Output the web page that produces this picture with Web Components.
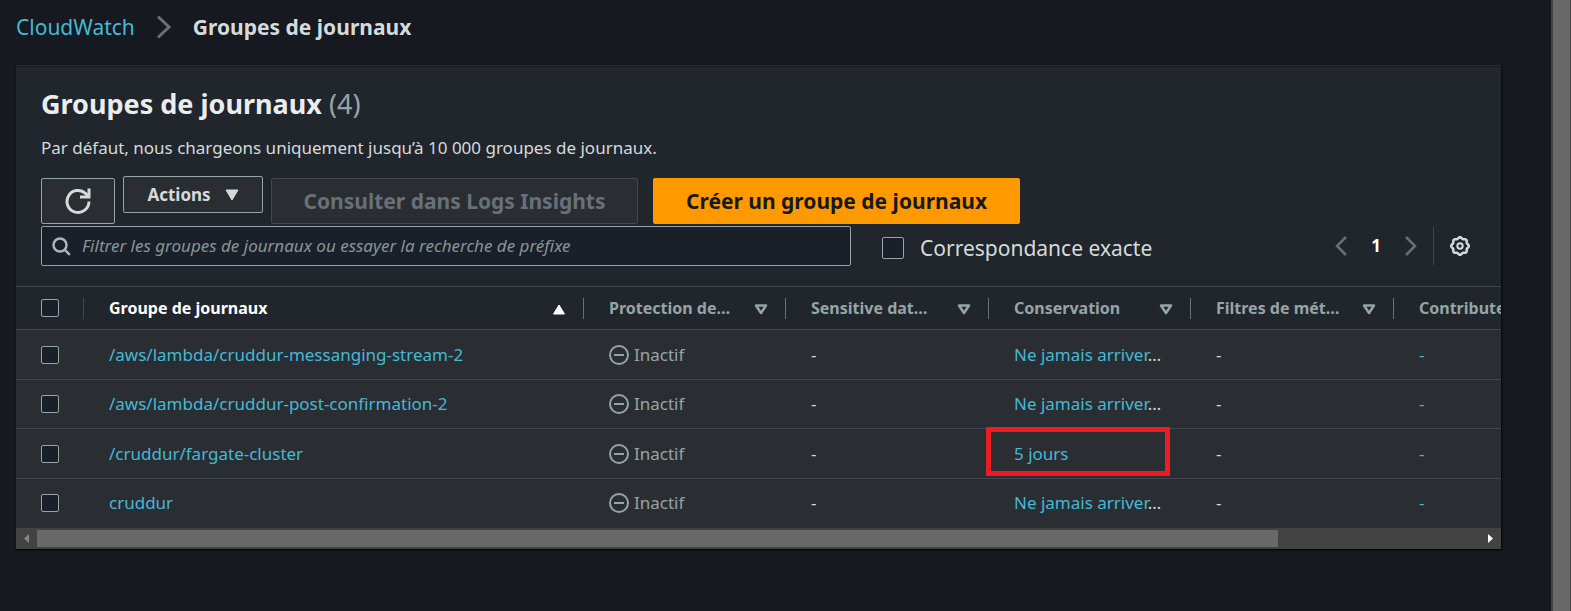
<!DOCTYPE html>
<html lang="fr">
<head>
<meta charset="utf-8">
<title>CloudWatch – Groupes de journaux</title>
<style>
  html, body { margin: 0; min-height: 100%; background: #16191f; }
  body { font-family: "Noto Sans", "Open Sans", sans-serif; font-size: 17px; line-height: 24px; color: #d5dbdb; }
</style>
</head>
<body>
<console-shell>
  <bread-crumbs></bread-crumbs>
  <log-panel>
    <panel-header slot="header"></panel-header>
    <filter-bar slot="filters"></filter-bar>
    <log-table></log-table>
  </log-panel>
</console-shell>

<script>
const define = (name, html, setup) => {
  const tpl = document.createElement('template');
  tpl.innerHTML = html;
  customElements.define(name, class extends HTMLElement {
    constructor() {
      super();
      this.attachShadow({ mode: 'open' }).append(tpl.content.cloneNode(true));
      if (setup) setup(this.shadowRoot);
    }
  });
};

const buttonCss = `
  button { font: inherit; font-weight: 700; box-sizing: border-box; margin: 0; padding: 0;
    display: flex; align-items: center; justify-content: center; color: #d5dbdb;
    background: #2a2e33; border: 1px solid #95a5a6; border-radius: 2px; white-space: nowrap; }`;

const checkCss = `
  input[type=checkbox] { appearance: none; box-sizing: border-box; display: block; flex: none; margin: 0;
    width: 18px; height: 18px; background: #1a2029; border: 1px solid #95a5a6; border-radius: 2px; }`;

define('console-shell', `
  <style>
    :host { display: flex; min-height: 100vh; }
    main { flex: 1; min-width: 0; padding: 11px 50px 24px 16px; }
    .scroll { flex: none; box-sizing: border-box; width: 20px; padding: 0 1px 0 2px; background: #424242; display: flex; }
    .scroll div { flex: 1; background: #686868; }
  </style>
  <main><slot></slot></main>
  <div class="scroll" aria-hidden="true"><div></div></div>`);

define('bread-crumbs', `
  <style>
    :host { display: block; font-size: 21px; line-height: 32px; }
    nav { display: flex; align-items: center; gap: 21px; }
    a { color: #44b9d6; text-decoration: none; }
    svg { display: block; }
    .here { font-weight: 700; }
  </style>
  <nav aria-label="Fil d’Ariane">
    <a href="#">CloudWatch</a>
    <svg width="16" height="24" viewBox="0 0 16 24" fill="none" stroke="#687078" stroke-width="3"><path d="M2 1.500l11 10.500L2 22.500"/></svg>
    <span class="here">Groupes de journaux</span>
  </nav>`);

define('log-panel', `
  <style>
    :host { display: block; margin-top: 22px; border-top: 1px solid #2a2e33; background: #21252c;
      box-shadow: 0 1px 1px 0 rgba(0,0,0,.6), 1px 1px 2px 0 rgba(0,0,0,.6), inset 0 1px 0 #16191f; }
    .top { padding: 20px 25px; }
  </style>
  <section>
    <div class="top"><slot name="header"></slot><slot name="filters"></slot></div>
    <slot></slot>
  </section>`);

define('panel-header', `
  <style>
    :host { display: block; }
    h1 { margin: 0; font-size: 27px; line-height: 36px; font-weight: 700; color: #eaeded; }
    h1 span { font-weight: 400; color: #95a5a6; }
    p { margin: 14px 0 0; font-size: 17px; line-height: 24px; }
    .actions { display: flex; align-items: flex-start; gap: 8px; margin-top: 16px; height: 50px; }
    ${buttonCss}
    button { height: 46px; margin-top: 2px; font-size: 21px; }
    .refresh { width: 74px; }
    .menu { width: 140px; height: 37px; margin-top: 0; gap: 14px; font-size: 17px; }
    .wide { width: 367px; }
    .wide:disabled { color: #687078; border-color: #414750; }
    .primary { margin-left: 7px; background: #ff9900; border-color: #ff9900; color: #16191f; }
    svg { display: block; }
  </style>
  <h1>Groupes de journaux <span>(4)</span></h1>
  <p>Par défaut, nous chargeons uniquement jusqu’à 10&nbsp;000 groupes de journaux.</p>
  <div class="actions">
    <button class="refresh" aria-label="Actualiser"><svg width="28" height="28" viewBox="0 0 28 28" fill="none" stroke="#d5dbdb" stroke-width="3"><path d="M25 14.500a11 11 0 1 1-3.500-8.100L24.500 9.500"/><path d="M25 1.500v8.500h-9"/></svg></button>
    <button class="menu">Actions <svg width="14" height="12" viewBox="0 0 14 12"><path d="M1 1h12L7 11z" fill="#d5dbdb" stroke="#d5dbdb" stroke-linejoin="round"/></svg></button>
    <button class="wide" disabled>Consulter dans Logs Insights</button>
    <button class="wide primary">Créer un groupe de journaux</button>
  </div>`);

define('filter-bar', `
  <style>
    :host { display: grid; grid-template-columns: minmax(0, 810fr) minmax(0, 625fr); align-items: center; }
    .search { box-sizing: border-box; height: 40px; display: flex; align-items: center; gap: 11px; padding: 0 10px;
      background: #1a2029; border: 1px solid #95a5a6; border-radius: 2px; }
    .search svg { flex: none; }
    .search input { flex: 1; min-width: 0; padding: 0; border: 0; outline: 0; background: none; font: inherit; color: #d5dbdb; }
    .search input::placeholder { color: #879596; font-style: italic; opacity: 1; }
    .rest { display: flex; align-items: center; padding-left: 31px; }
    ${checkCss}
    .exact { display: flex; align-items: center; gap: 16px; padding-top: 4px; font-size: 21px; line-height: 28px; white-space: nowrap; }
    .exact input[type=checkbox] { width: 22px; height: 22px; }
    .pages { margin-left: auto; display: flex; align-items: center; color: #fff; font-weight: 700; }
    .pages button { margin: 0; padding: 0; border: 0; background: none; display: block; }
    .pages svg { display: block; }
    .num { width: 58px; text-align: center; }
    .gear { border-left: 1px solid #414750; height: 38px; margin-left: 16px; padding: 0 6px 0 16px; display: flex; align-items: center; }
  </style>
  <div class="search">
    <svg width="19" height="19" viewBox="0 0 19 19" fill="none" stroke="#aab7b8" stroke-width="2.500"><circle cx="8" cy="8" r="6.500"/><path d="M12.800 12.800l5 5"/></svg>
    <input type="text" aria-label="Filtrer les groupes de journaux" placeholder="Filtrer les groupes de journaux ou essayer la recherche de préfixe">
  </div>
  <div class="rest">
    <label class="exact"><input type="checkbox">Correspondance exacte</label>
    <div class="pages">
      <button aria-label="Page précédente"><svg width="12" height="20" viewBox="0 0 12 20" fill="none" stroke="#687078" stroke-width="2.500"><path d="M11 1L2 10l9 9"/></svg></button>
      <span class="num">1</span>
      <button aria-label="Page suivante"><svg width="12" height="20" viewBox="0 0 12 20" fill="none" stroke="#687078" stroke-width="2.500"><path d="M1 1l9 9-9 9"/></svg></button>
      <div class="gear"><button aria-label="Préférences"><svg id="gear" width="20" height="20" viewBox="0 0 20 20" fill="none" stroke="#d5dbdb" stroke-width="2.500"><path stroke-linejoin="round"/><circle cx="10" cy="10" r="2.700" stroke-width="2"/></svg></button></div>
    </div>
  </div>`, root => {
    // Eight shallow lobes around the hub of the settings wheel.
    let d = '';
    for (let i = 0; i <= 96; i++) {
      const a = i / 96 * 2 * Math.PI;
      const r = 8.1 + 0.7 * Math.cos(8 * a);
      d += (i ? 'L' : 'M') + (10 + r * Math.cos(a)).toFixed(2) + ' ' + (10 + r * Math.sin(a)).toFixed(2);
    }
    root.querySelector('#gear path').setAttribute('d', d + 'z');
  });

const sortIcon = up => up
  ? '<svg width="14" height="11" viewBox="0 0 14 11"><path d="M7 1l5.500 9h-11z" fill="#fff" stroke="#fff" stroke-linejoin="round"/></svg>'
  : '<svg width="14" height="11" viewBox="0 0 14 11"><path d="M2 1.500h10L7 9z" fill="none" stroke="#95a5a6" stroke-width="2.500" stroke-linejoin="round"/></svg>';
const heads = ['Groupe de journaux', 'Protection de…', 'Sensitive dat…', 'Conservation', 'Filtres de mét…', 'Contributeurs'];
const rows = [
  ['/aws/lambda/cruddur-messanging-stream-2', 'Ne jamais arriver', '…'],
  ['/aws/lambda/cruddur-post-confirmation-2', 'Ne jamais arriver', '…'],
  ['/cruddur/fargate-cluster', '5 jours', '', true],
  ['cruddur', 'Ne jamais arriver', '…'],
];

define('log-table', `
  <style>
    :host { display: block; }
    .clip { overflow: hidden; }
    table { width: 1600px; table-layout: fixed; border-collapse: separate; border-spacing: 0; }
    .c0 { width: 68px; } .c1 { width: 500px; } .c { width: 202px; } .d { width: 203px; }
    th, td { box-sizing: border-box; padding: 0 18px 0 25px; text-align: left; font-weight: 400; white-space: nowrap; }
    th { height: 44px; border: solid #414750; border-width: 1px 0; color: #95a5a6; font-weight: 700; padding-right: 0; }
    th:nth-child(2) { color: #fff; }
    .head { display: flex; align-items: center; height: 21px; border-right: 1px solid #687078; padding-right: 17px; gap: 12px; font-size: 16px; }
    .head span { flex: 1; line-height: 24px; }
    .head svg { flex: none; margin-top: 3px; }
    .pick { border-color: #414750; }
    td { height: 50px; background: #2a2e33; border-bottom: 1px solid #414750; }
    tr:nth-child(even) td { height: 49px; }
    tr:last-child td { border-bottom-color: #2a2e33; }
    a { color: #44b9d6; text-decoration: none; }
    .state { display: flex; align-items: center; gap: 5px; color: #95a5a6; }
    .state svg { display: block; }
    .mark { position: relative; }
    .mark i { position: absolute; inset: -2px 21px 2px -3px; border: 5px solid #ed1c24; }
    ${checkCss}
    .bar { display: flex; align-items: center; justify-content: space-between; height: 21px; background: #424242; }
    .bar svg { flex: none; width: 21px; height: 21px; display: block; }
    .rail { flex: 1; }
    .thumb { width: 86%; height: 17px; background: #686868; }
  </style>
  <div class="clip"><table>
    <colgroup><col class="c0"><col class="c1"><col class="c"><col class="d"><col class="c"><col class="d"><col></colgroup>
    <thead><tr><th><div class="head pick"><input type="checkbox" aria-label="Tout sélectionner"></div></th></tr></thead>
    <tbody></tbody>
  </table></div>
  <div class="bar" aria-hidden="true">
    <svg viewBox="0 0 21 21"><path d="M13 6v9l-5-4.500z" fill="#868686"/></svg>
    <div class="rail"><div class="thumb"></div></div>
    <svg viewBox="0 0 21 21"><path d="M8 6v9l5-4.500z" fill="#fff"/></svg>
  </div>`, root => {
    root.querySelector('thead tr').insertAdjacentHTML('beforeend',
      heads.map((h, i) => `<th scope="col"><div class="head"><span>${h}</span>${sortIcon(i === 0)}</div></th>`).join(''));
    root.querySelector('tbody').innerHTML = rows.map(([name, keep, more, marked]) => `
      <tr>
        <td><input type="checkbox" aria-label="Sélectionner ${name}"></td>
        <td><a href="#">${name}</a></td>
        <td><div class="state"><svg width="20" height="20" viewBox="0 0 20 20" fill="none" stroke="#95a5a6" stroke-width="2"><circle cx="10" cy="10" r="9"/><path d="M5 10h10"/></svg>Inactif</div></td>
        <td>-</td>
        <td class="${marked ? 'mark' : ''}"><a href="#">${keep}</a>${more}${marked ? '<i></i>' : ''}</td>
        <td>-</td>
        <td><a href="#">-</a></td>
      </tr>`).join('');
  });
</script>
</body>
</html>
